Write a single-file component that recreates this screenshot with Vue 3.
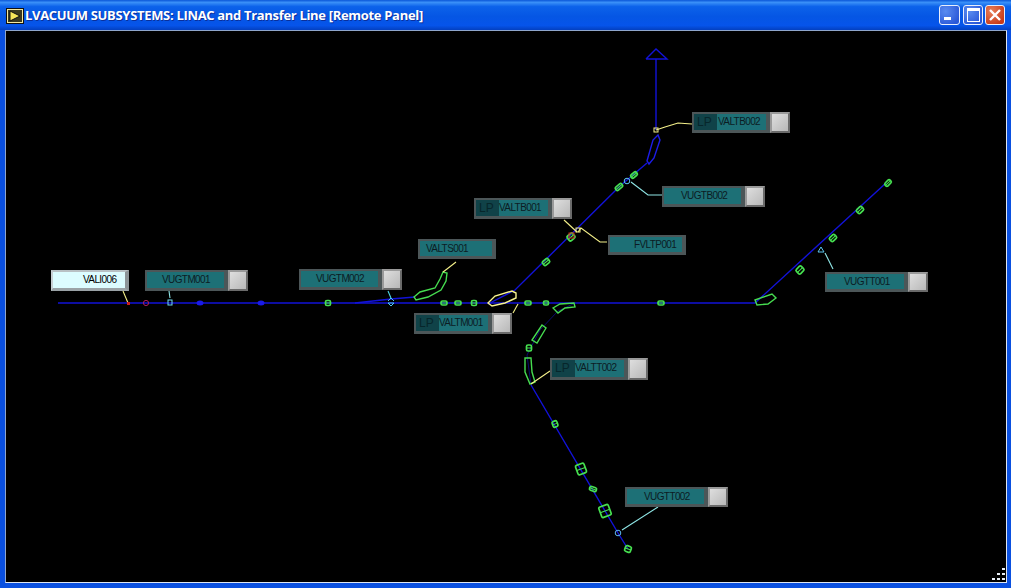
<script setup>
// panel origin in page coords, everything below is given in page coords
const ORIGIN = { x: 6, y: 31 }

const widgets = [
  { name: 'VALI006', x: 51, y: 270, w: 78, h: 21, kind: 'light', textX: 30 },
  { name: 'VUGTM001', x: 145, y: 270, w: 103, h: 21, button: true, textX: 15 },
  { name: 'VUGTM002', x: 299, y: 269, w: 103, h: 21, button: true, textX: 15 },
  { name: 'VALTS001', x: 418, y: 239, w: 78, h: 20, textX: 6 },
  { name: 'VALTM001', x: 414, y: 313, w: 98, h: 21, button: true, lp: true, textX: 23 },
  { name: 'VALTB001', x: 474, y: 198, w: 98, h: 21, button: true, lp: true, textX: 23 },
  { name: 'FVLTP001', x: 608, y: 235, w: 78, h: 20, textX: 24 },
  { name: 'VALTB002', x: 692, y: 112, w: 98, h: 21, button: true, lp: true, textX: 24 },
  { name: 'VUGTB002', x: 662, y: 186, w: 103, h: 21, button: true, textX: 17 },
  { name: 'VUGTT001', x: 825, y: 272, w: 103, h: 20, button: true, textX: 17 },
  { name: 'VALTT002', x: 550, y: 358, w: 98, h: 22, button: true, lp: true, textX: 23 },
  { name: 'VUGTT002', x: 625, y: 487, w: 103, h: 20, button: true, textX: 17 }
]

const pos = (w) => ({
  left: w.x - ORIGIN.x + 'px',
  top: w.y - ORIGIN.y + 'px',
  width: w.w + 'px',
  height: w.h + 'px'
})

const beam = [
  '58,303 755,303 886,183',
  '488,304 515,290 620,186 647,163',
  '656,130 656,59',
  '646,59 656,49 667,59 646,59',
  '531,385 618,533 628,549',
  '355,303 391,299 415,297'
]

// closed outlines of the bends
const bends = [
  { c: '#46dc50', p: '414,297 420,292 435,288 440,279 443,272 447,273 446,281 441,290 428,297 416,300' },
  { c: '#46dc50', p: '553,308 560,304 574,303 575,307 565,308 558,313' },
  { c: '#46dc50', p: '755,300 772,294 776,298 768,304 757,305' },
  { c: '#46dc50', p: '542,325 546,328 537,343 532,340' },
  { c: '#46dc50', p: '525,358 531,358 532,372 535,382 530,384 525,372' },
  { c: '#f8f490', p: '488,303 495,296 512,291 516,293 516,298 505,303 492,306' },
  { c: '#1c1ce8', p: '647,161 653,140 658,135 660,140 654,158 649,164' }
]

const leads = [
  { c: '#f4f08a', p: '123,291 128,303' },
  { c: '#f4f08a', p: '456,262 447,269 443,272' },
  { c: '#f4f08a', p: '518,304 513,313' },
  { c: '#f4f08a', p: '564,220 577,232' },
  { c: '#f4f08a', p: '607,242 600,242 581,228 578,232' },
  { c: '#f4f08a', p: '692,124 678,123 665,127 656,130' },
  { c: '#f4f08a', p: '550,371 531,384' },
  { c: '#8fe6e6', p: '169,291 170,298' },
  { c: '#4fd8e8', p: '388,291 391,298' },
  { c: '#8fe6e6', p: '631,182 648,195 662,195' },
  { c: '#8fe6e6', p: '833,269 825,253' },
  { c: '#8fe6e6', p: '658,507 622,530' }
]

// small gauges and pumps along the line
const parts = [
  { x: 328, y: 303, w: 5, h: 5 }, { x: 444, y: 303, w: 6, h: 4 }, { x: 458, y: 303, w: 6, h: 4 },
  { x: 474, y: 303, w: 5, h: 5 }, { x: 528, y: 303, w: 6, h: 4 }, { x: 546, y: 303, w: 5, h: 4 },
  { x: 661, y: 303, w: 6, h: 4 }, { x: 546, y: 262, w: 7, h: 5, r: -40 }, { x: 571, y: 237, w: 7, h: 6, r: -40 },
  { x: 619, y: 187, w: 8, h: 4, r: -40 }, { x: 634, y: 175, w: 7, h: 4, r: -40 }, { x: 800, y: 270, w: 7, h: 6, r: -45 },
  { x: 833, y: 238, w: 7, h: 5, r: -45 }, { x: 860, y: 210, w: 7, h: 5, r: -45 }, { x: 888, y: 183, w: 7, h: 4, r: -45 },
  { x: 529, y: 348, w: 5, h: 6 }, { x: 555, y: 424, w: 5, h: 6, r: -20 }, { x: 581, y: 469, w: 9, h: 10, r: -20 },
  { x: 593, y: 489, w: 7, h: 4, r: 20 }, { x: 605, y: 511, w: 10, h: 11, r: -20 }, { x: 628, y: 549, w: 6, h: 6, r: 20 }
]

const blobs = [
  { x: 200, y: 303, c: '#1a1ae8' }, { x: 261, y: 303, c: '#1a1ae8' }
]

const grip = [
  [17, 2], [12, 7], [17, 7], [7, 12], [12, 12], [17, 12]
]
</script>

<template>
  <div class="window">
    <div class="titlebar">
      <svg class="app-icon" width="18" height="16" viewBox="0 0 18 16">
        <rect x="0.5" y="0.5" width="17" height="15" fill="#f4e9a0" stroke="#111" />
        <rect x="2" y="2" width="14" height="12" fill="#3a3a20" />
        <path d="M4 3 L4 13 L14 8 Z" fill="#f6e65a" stroke="#111" />
      </svg>
      <span class="title">LVACUUM SUBSYSTEMS: LINAC and Transfer Line [Remote Panel]</span>
      <div class="controls">
        <button class="ctl min"><span class="dash"></span></button>
        <button class="ctl max"><span class="box"></span></button>
        <button class="ctl close">
          <svg width="14" height="14" viewBox="0 0 14 14">
            <path d="M2 2 L12 12 M12 2 L2 12" stroke="#fff" stroke-width="2.4" />
          </svg>
        </button>
      </div>
    </div>
    <div class="panel">
      <svg class="diagram" width="1000" height="551" viewBox="6 31 1000 551" fill="none">
        <polyline v-for="b in beam" :key="b" :points="b" stroke="#1212d8" stroke-width="1.4" />
        <polyline points="575,303 558,311 540,330 527,355 531,385" stroke="#0c0c70" stroke-width="1" />
        <polygon v-for="b in bends" :key="b.p" :points="b.p" :stroke="b.c" stroke-width="1.4" />
        <polyline v-for="l in leads" :key="l.p" :points="l.p" :stroke="l.c" stroke-width="1.1" />
        <g v-for="p in parts" :key="p.x + '-' + p.y" :transform="`translate(${p.x} ${p.y}) rotate(${p.r || 0})`">
          <rect :x="-p.w / 2" :y="-p.h / 2" :width="p.w" :height="p.h" rx="1.5" stroke="#46e050" stroke-width="1.7" />
          <line :x1="-p.w / 2" y1="0" :x2="p.w / 2" y2="0" stroke="#46e050" stroke-width="1" />
        </g>
        <ellipse v-for="b in blobs" :key="b.x" :cx="b.x" :cy="b.y" rx="3.5" ry="2.5" :fill="b.c" />
        <rect x="127" y="302" width="3" height="3" fill="#c81e1e" />
        <circle cx="146" cy="303" r="2.6" stroke="#b01e5a" />
        <rect x="168" y="300" width="4" height="5" stroke="#6fd8f0" />
        <path d="M388 303 L394 303 L391 306 Z M388 301 L391 298 L394 301" stroke="#4fc8f0" />
        <circle cx="627" cy="181" r="2.8" stroke="#5fc8f0" />
        <path d="M821 247 L824 252 L818 252 Z" stroke="#5fc8f0" />
        <circle cx="618" cy="533" r="2.8" stroke="#5fb8f0" />
        <rect x="654" y="128" width="4" height="4" stroke="#f4f08a" />
        <rect x="569" y="233" width="5" height="5" stroke="#c82020" />
        <rect x="576" y="228" width="4" height="4" stroke="#f4f08a" />
      </svg>

      <div
        v-for="w in widgets"
        :key="w.name"
        class="ctl-box"
        :class="{ light: w.kind === 'light' }"
        :style="pos(w)"
      >
        <div class="field">
          <span v-if="w.lp" class="lp">LP</span>
          <span class="name" :style="{ left: w.textX + 'px' }">{{ w.name }}</span>
        </div>
        <div v-if="w.button" class="push"></div>
      </div>

      <svg class="grip" width="20" height="15" viewBox="0 0 20 15">
        <rect v-for="(d, i) in grip" :key="i" :x="d[0] - 1" :y="d[1] - 1" width="3" height="2" fill="#e8eef5" />
      </svg>
    </div>
  </div>
</template>

<style>
html, body { margin: 0; background: #000; }
</style>

<style scoped>
.window {
  width: 1011px;
  height: 588px;
  display: flex;
  flex-direction: column;
  overflow: hidden;
  background: #0a50e0;
  padding: 0 4px 4px 5px;
  box-sizing: border-box;
}

.titlebar {
  height: 30px;
  margin: 0 -4px 0 -5px;
  padding: 0 6px;
  display: flex;
  align-items: center;
  flex-shrink: 0;
  background: linear-gradient(180deg, #0a56d8 0%, #3a90f8 8%, #0c62ea 22%, #0556e4 55%, #0654ea 85%, #0340c0 100%);
}

.app-icon { flex-shrink: 0; margin-top: 1px; }

.title {
  margin-left: 1px;
  color: #fff;
  font: bold 13px "Open Sans", sans-serif;
  letter-spacing: -0.32px;
  white-space: nowrap;
  text-shadow: 1px 1px 0 #0a2f9a;
}

.controls {
  margin-left: auto;
  display: flex;
  gap: 2px;
}

.ctl {
  width: 20px;
  height: 20px;
  padding: 0;
  border: 1px solid #e8eefc;
  border-radius: 3px;
  display: flex;
  align-items: center;
  justify-content: center;
  position: relative;
  background: radial-gradient(circle at 30% 30%, #5a8cf0, #2a58d8 80%);
}

.ctl.min { width: 21px; margin-right: 1px; }

.ctl.close { background: radial-gradient(circle at 30% 30%, #e8805a, #c83a18 80%); }

.dash {
  position: absolute;
  left: 4px;
  bottom: 4px;
  width: 7px;
  height: 3px;
  background: #fff;
}

.box {
  width: 11px;
  height: 10px;
  border: 1px solid #fff;
  border-top-width: 3px;
}

.panel {
  position: relative;
  flex: 1;
  background: #000;
  border: 1px solid #dfe6f2;
  border-top-color: #8fa6cc;
  border-left-color: #8fa6cc;
  margin-bottom: 1px;
}

.diagram {
  position: absolute;
  inset: 0;
}

.ctl-box {
  position: absolute;
  display: flex;
  font: 10px "Liberation Sans", Arial, sans-serif;
  letter-spacing: -0.6px;
  color: #0c1c24;
}

.field {
  position: relative;
  flex: 1;
  background: #1d7076;
  border: 2px solid #4c5658;
  border-right-width: 4px;
  border-bottom-width: 3px;
  overflow: hidden;
}

.light .field {
  background: #dcfcff;
  border-color: #b8c0c4 #8c9498 #9aa2a6 #c8d0d4;
  color: #000;
}

.lp {
  position: absolute;
  left: 0;
  top: 0;
  bottom: 0;
  width: 23px;
  background: #104248;
  font-size: 12px;
  letter-spacing: 0;
  line-height: 16px;
  padding-left: 3px;
  box-sizing: border-box;
  color: #07262b;
}

.name {
  position: absolute;
  top: 1px;
  line-height: 14px;
  white-space: nowrap;
}

.push {
  width: 20px;
  flex-shrink: 0;
  box-sizing: border-box;
  background: linear-gradient(135deg, #dedede, #b8b8b8);
  border: 2px solid #6a6a6a;
  border-top-color: #9a9a9a;
  border-left-color: #9a9a9a;
}

.grip {
  position: absolute;
  right: 0;
  bottom: 0;
}
</style>
